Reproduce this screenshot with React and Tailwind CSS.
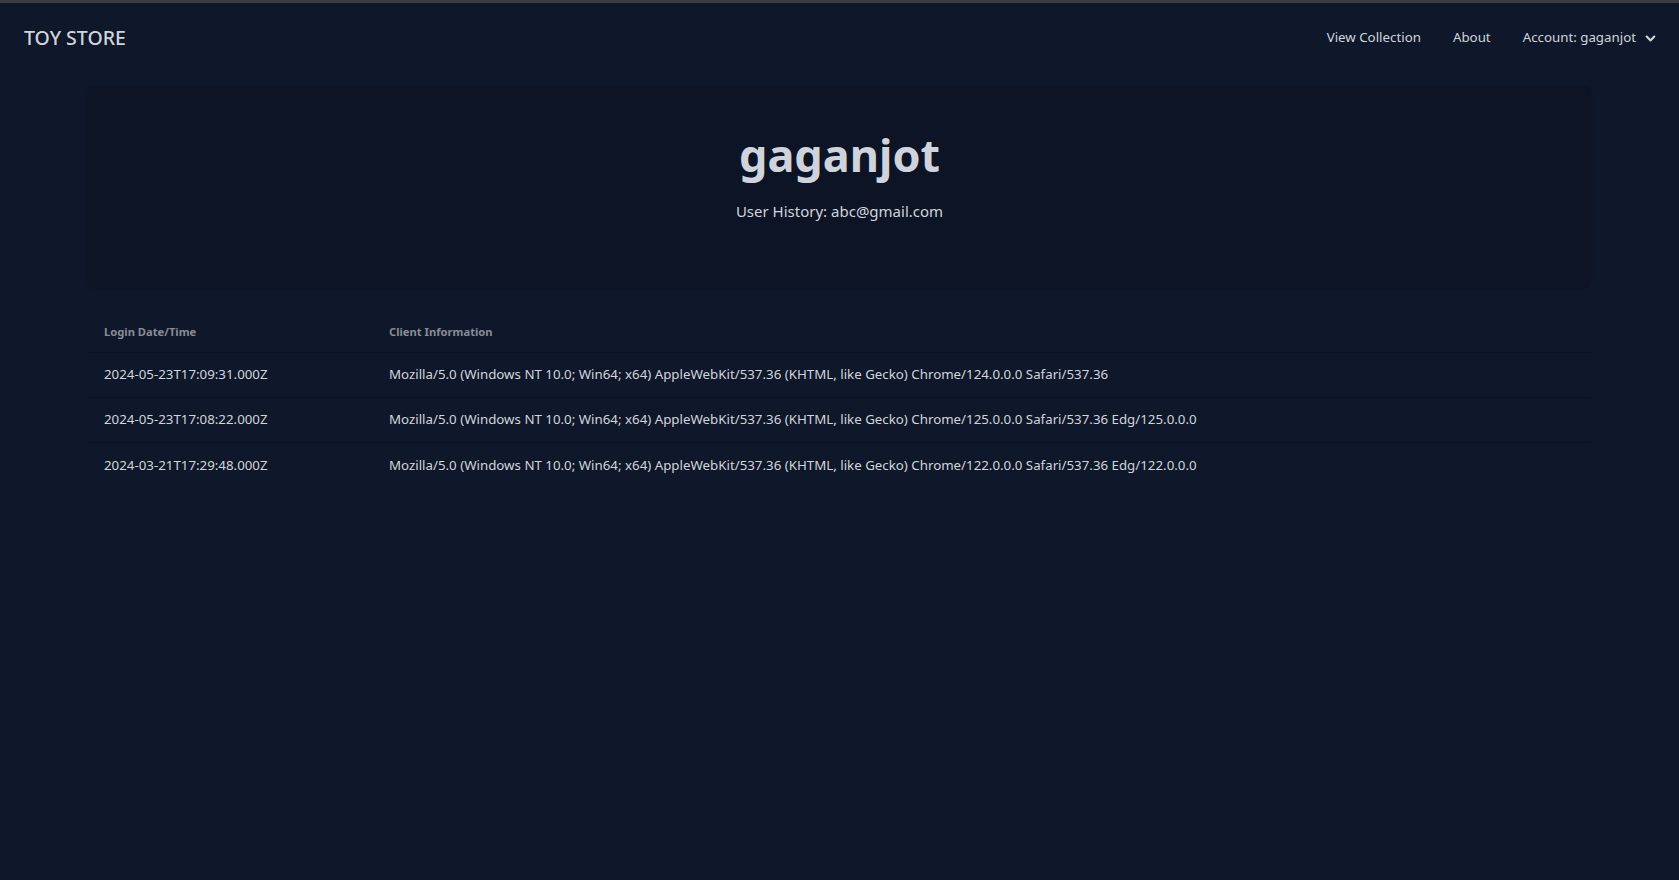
import React from "react";

const rows = [
  ["2024-05-23T17:09:31.000Z", "Mozilla/5.0 (Windows NT 10.0; Win64; x64) AppleWebKit/537.36 (KHTML, like Gecko) Chrome/124.0.0.0 Safari/537.36"],
  ["2024-05-23T17:08:22.000Z", "Mozilla/5.0 (Windows NT 10.0; Win64; x64) AppleWebKit/537.36 (KHTML, like Gecko) Chrome/125.0.0.0 Safari/537.36 Edg/125.0.0.0"],
  ["2024-03-21T17:29:48.000Z", "Mozilla/5.0 (Windows NT 10.0; Win64; x64) AppleWebKit/537.36 (KHTML, like Gecko) Chrome/122.0.0.0 Safari/537.36 Edg/122.0.0.0"],
];

export default function App() {
  return (
    <div className="min-h-[880px] bg-[#0f172a] text-[#d1d5db]" style={{ fontFamily: '"Noto Sans", "Open Sans", sans-serif' }}>
      <div className="h-[3px] bg-[#3c3c3c]" />
      <nav className="flex h-[69px] items-center justify-between pl-6 pr-[22px] pt-[1px]">
        <div className="text-[19.5px] font-medium text-[#d1d5db]">TOY STORE</div>
        <div className="flex items-center text-[13.3px]">
          <a className="mr-[32px]">View Collection</a>
          <a className="mr-[32px]">About</a>
          <a className="flex items-center">
            Account: gaganjot
            <svg className="ml-[8px]" width="13" height="13" viewBox="0 0 24 24" fill="none" stroke="currentColor" strokeWidth="4" strokeLinecap="round" strokeLinejoin="round">
              <path d="M5 8.5l7 7 7-7" />
            </svg>
          </a>
        </div>
      </nav>
      <div className="mx-[88px] mt-[15px] flex h-[200px] flex-col items-center rounded-md bg-[#0d1425] pt-[45px] shadow-sm">
        <h1 className="text-[45px] font-bold leading-none text-[#cfd4dc]">gaganjot</h1>
        <p className="mt-[22px] text-[15px] leading-6">User History: abc@gmail.com</p>
      </div>
      <div className="mx-[88px] mt-[26px]">
        <div className="flex h-[40px] items-center border-b border-[#0c1221] text-[11.2px] font-bold text-[#878c97]">
          <div className="w-[301px] pl-4">Login Date/Time</div>
          <div>Client Information</div>
        </div>
        {rows.map((r, i) => (
          <div key={i} className={"flex h-[45px] items-center text-[13.3px] " + (i < rows.length - 1 ? "border-b border-[#0c1221]" : "")}>
            <div className="w-[301px] pl-4">{r[0]}</div>
            <div>{r[1]}</div>
          </div>
        ))}
      </div>
    </div>
  );
}
